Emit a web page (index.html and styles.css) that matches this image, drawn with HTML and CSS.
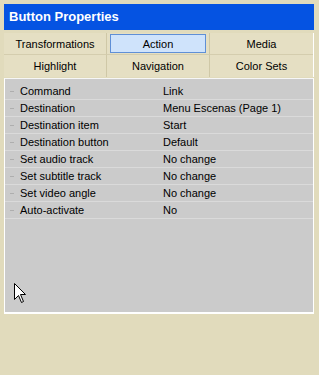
FILE: index.html
```html
<!DOCTYPE html>
<html>
<head>
<meta charset="utf-8">
<link rel="stylesheet" href="styles.css">
</head>
<body>
<div class="panel">
  <div class="title">Button Properties</div>
  <div class="tabs">
    <div class="tab">Transformations</div>
    <div class="tab active"><span>Action</span></div>
    <div class="tab">Media</div>
    <div class="tab">Highlight</div>
    <div class="tab">Navigation</div>
    <div class="tab">Color Sets</div>
  </div>
  <div class="list">
    <div class="row"><i class="mk"></i><span class="k">Command</span><span class="v">Link</span></div>
    <div class="row"><i class="mk"></i><span class="k">Destination</span><span class="v">Menu Escenas (Page 1)</span></div>
    <div class="row"><i class="mk"></i><span class="k">Destination item</span><span class="v">Start</span></div>
    <div class="row"><i class="mk"></i><span class="k">Destination button</span><span class="v">Default</span></div>
    <div class="row"><i class="mk"></i><span class="k">Set audio track</span><span class="v">No change</span></div>
    <div class="row"><i class="mk"></i><span class="k">Set subtitle track</span><span class="v">No change</span></div>
    <div class="row"><i class="mk"></i><span class="k">Set video angle</span><span class="v">No change</span></div>
    <div class="row"><i class="mk"></i><span class="k">Auto-activate</span><span class="v">No</span></div>
    <svg class="cursor" width="13" height="21" viewBox="0 0 13 21"><path d="M0.5 0.5 L0.5 16.5 L4.5 12.5 L7.5 19.5 L9.5 18.5 L6.5 11.5 L11.5 11.5 Z" fill="#fff" stroke="#000" stroke-width="1"/></svg>
  </div>
</div>
</body>
</html>
```

FILE: styles.css
```css
html, body {
  margin: 0;
  padding: 0;
}
body {
  background: #e1dbbc;
  width: 319px;
  height: 375px;
  font-family: Tahoma, "Liberation Sans", Arial, sans-serif;
  font-size: 11px;
  color: #000;
}
.panel {
  position: relative;
  margin: 4px 0 0 4px;
  width: 310px;
  display: flex;
  flex-direction: column;
}
.title {
  height: 26px;
  background: #0553e2;
  color: #fff;
  font-weight: bold;
  font-size: 13px;
  line-height: 26px;
  padding-left: 5px;
  box-sizing: border-box;
}
.tabs {
  margin-top: 3px;
  display: grid;
  grid-template-columns: 103px 103px 103px;
  grid-template-rows: 22px 22px;
  background: #e5dfc3;
  border-right: 1px solid #ffffff;
  width: 309px;
}
.tab {
  display: flex;
  align-items: center;
  justify-content: center;
  border-right: 1px solid #cfc8a7;
  border-bottom: 1px solid #d4cdae;
  box-sizing: border-box;
  font-size: 11px;
}
.tab:nth-child(3n) {
  border-right: none;
}
.tab:nth-child(n+4) {
  border-bottom: none;
}
.tab.active span {
  display: flex;
  align-items: center;
  justify-content: center;
  width: 96px;
  height: 19px;
  box-sizing: border-box;
  background: #cfe3fb;
  border: 1px solid #5f8fd6;
}
.list {
  position: relative;
  margin-top: 1px;
  height: 236px;
  background: #cbcbcb;
  border-top: 1px solid #f6f6f6;
  border-bottom: 2px solid #ffffff;
  border-left: 1px solid #ffffff;
  border-right: 1px solid #ffffff;
  padding-top: 4px;
  box-sizing: border-box;
  width: 310px;
}
.row {
  display: flex;
  align-items: center;
  height: 17px;
  border-bottom: 1px solid #dadada;
  box-sizing: border-box;
}
.mk {
  width: 4px;
  height: 1px;
  background: #aeaeae;
  margin-left: 5px;
  margin-right: 6px;
}
.k {
  width: 143px;
}
.v {
  flex: 1;
}
.cursor {
  position: absolute;
  left: 9px;
  top: 204px;
}
```
